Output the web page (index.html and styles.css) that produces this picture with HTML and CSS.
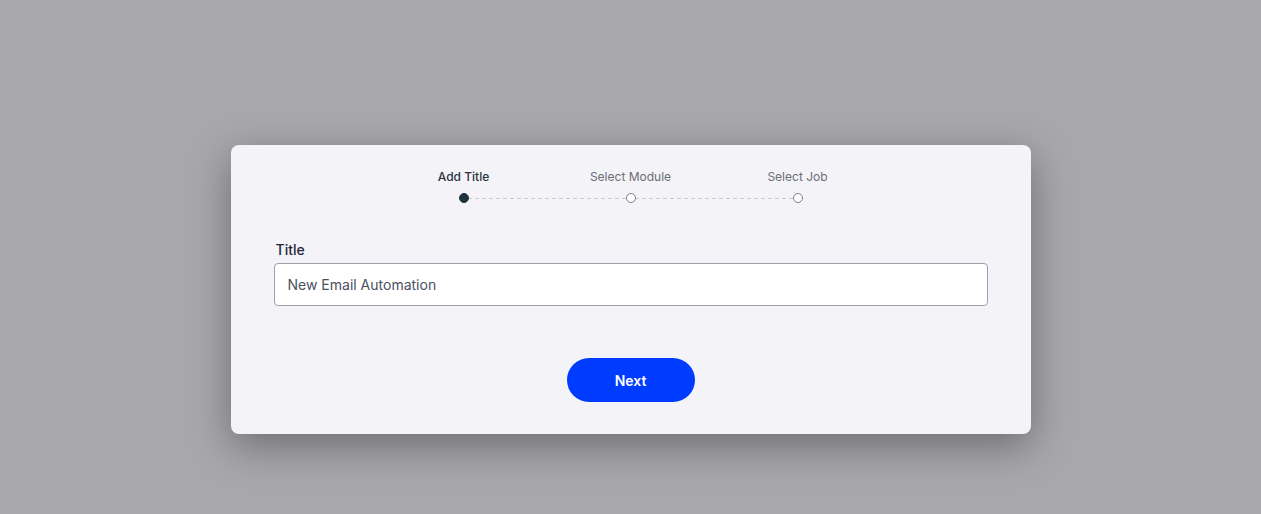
FILE: index.html
```html
<!DOCTYPE html>
<html>
<head>
<meta charset="utf-8">
<link rel="stylesheet" href="styles.css">
</head>
<body>
<div class="overlay">
  <div class="modal">
    <div class="stepper">
      <div class="step active">
        <span class="step-label">Add Title</span>
        <span class="dot"></span>
      </div>
      <div class="step">
        <span class="step-label">Select Module</span>
        <span class="dot"></span>
      </div>
      <div class="step">
        <span class="step-label">Select Job</span>
        <span class="dot"></span>
      </div>
    </div>
    <div class="field">
      <label class="field-label">Title</label>
      <div class="input">New Email Automation</div>
    </div>
    <div class="actions">
      <button class="btn-next">Next</button>
    </div>
  </div>
</div>
</body>
</html>
```
FILE: styles.css
```css
html, body {
  margin: 0;
  padding: 0;
  height: 100%;
}
body {
  background: #a8a7ac;
  font-family: Inter, "Noto Sans", sans-serif;
}
.overlay {
  display: flex;
  justify-content: center;
  padding-top: 145px;
}
.modal {
  width: 800px;
  box-sizing: border-box;
  height: 289px;
  background: #f3f3f8;
  border-radius: 8px;
  box-shadow: 0 12px 40px rgba(0, 0, 0, 0.35);
  padding: 24px 43px 0;
}
.stepper {
  display: flex;
  justify-content: center;
}
.step {
  width: 167px;
  display: flex;
  flex-direction: column;
  align-items: center;
  position: relative;
}
.step-label {
  font-size: 12px;
  line-height: 15px;
  color: #6b6e74;
}
.step.active .step-label {
  color: #2b3340;
  font-weight: 500;
}
.step + .step::before {
  content: "";
  position: absolute;
  left: -79px;
  right: 88px;
  top: 29px;
  height: 1px;
  background: repeating-linear-gradient(to right, #c9ccd2 0 4px, transparent 4px 7px);
}
.dot {
  margin-top: 9px;
  width: 8px;
  height: 8px;
  border-radius: 50%;
  border: 1px solid #7b7f87;
  background: #fff;
  position: relative;
  z-index: 1;
}
.step.active .dot {
  background: #1f323e;
  border-color: #1f323e;
}
.field {
  margin-top: 38px;
  display: flex;
  flex-direction: column;
}
.field-label {
  font-size: 14px;
  line-height: 17px;
  font-weight: 500;
  color: #1f2937;
  padding-left: 2px;
  margin-bottom: 5px;
}
.input {
  height: 43px;
  box-sizing: border-box;
  border: 1px solid #9ca1ad;
  border-radius: 4px;
  background: #fff;
  padding: 0 13px;
  display: flex;
  align-items: center;
  font-size: 14px;
  color: #4a5161;
}
.actions {
  display: flex;
  justify-content: center;
  margin-top: 52px;
}
.btn-next {
  width: 128px;
  height: 44px;
  border: none;
  border-radius: 22px;
  background: #003cff;
  color: #fff;
  font-family: Inter, "Noto Sans", sans-serif;
  font-size: 14px;
  font-weight: 600;
}
```
